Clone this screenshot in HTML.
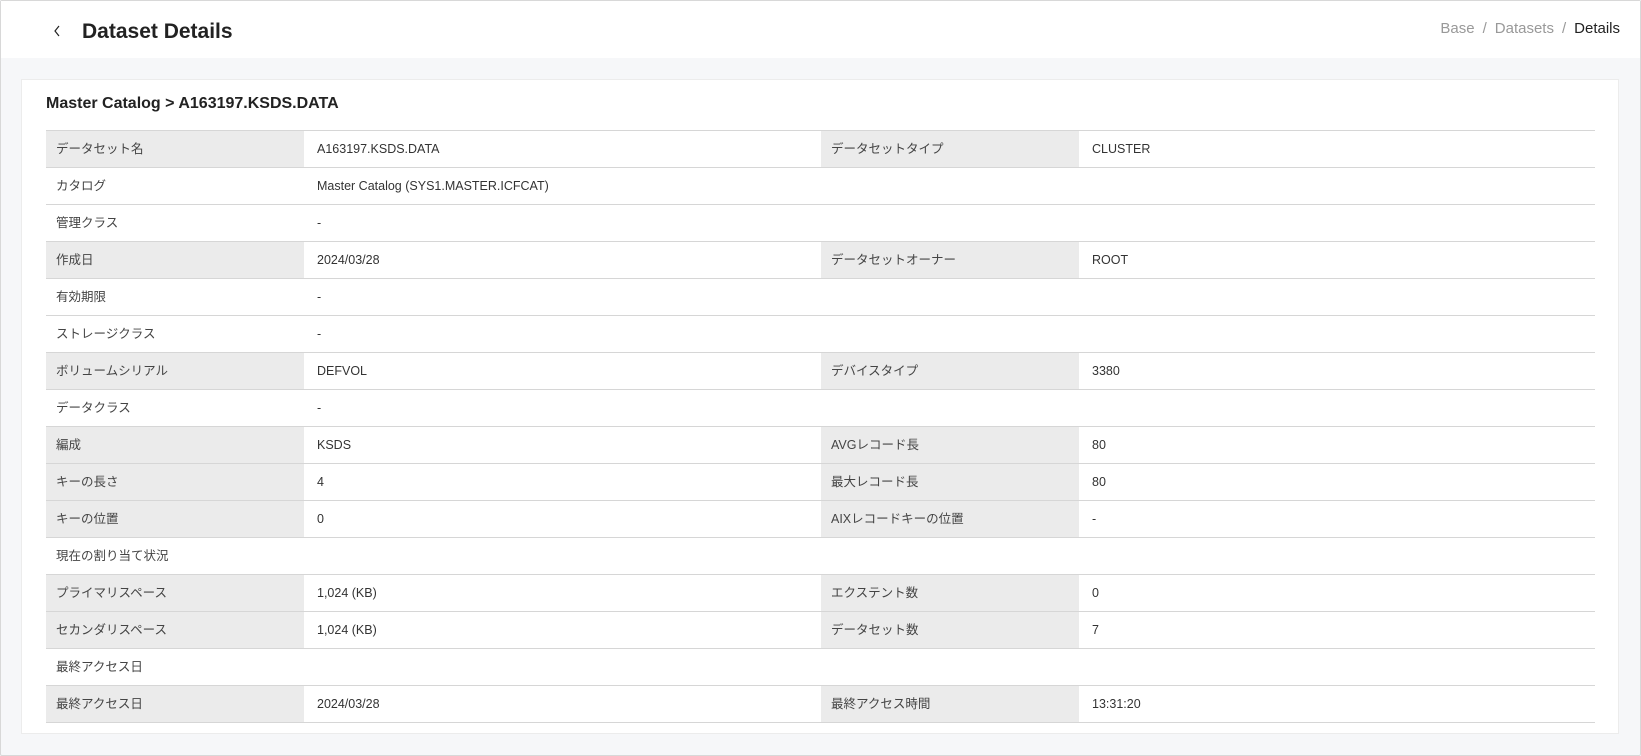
<!DOCTYPE html>
<html><head><meta charset="utf-8"><style>
*{margin:0;padding:0;box-sizing:border-box}
body{width:1641px;height:756px;background:#f6f7f9;font-family:"Liberation Sans","Noto Sans CJK JP",sans-serif;color:#333;position:relative;overflow:hidden}
.frame{position:absolute;left:0;top:0;width:1641px;height:756px;border:1px solid #d8d8d8;border-radius:2px}
.hdr{position:absolute;left:1px;top:1px;width:1639px;height:57px;background:#fff}
.back{position:absolute;left:50px;top:23px}
.title{position:absolute;left:82px;top:19px;font-size:21px;line-height:26px;font-weight:bold;color:#222}
.bc{position:absolute;right:21px;top:19px;font-size:15px;line-height:20px;color:#999}
.bc b{color:#222;font-weight:normal}
.bc span{margin:0 8px}
.card{position:absolute;left:21px;top:79px;width:1598px;height:655px;background:#fff;border:1px solid #ececec}
.sub{position:absolute;left:46px;top:94px;font-size:16px;line-height:20px;font-weight:bold;color:#222}
table{position:absolute;left:46px;top:130px;width:1549px;border-collapse:collapse;font-size:12.5px}
td{height:37px;line-height:16px;vertical-align:middle;border-top:1px solid #d6d6d6;border-bottom:1px solid #d6d6d6;padding:0 0 0 10px;color:#444}
td.v{padding-left:13px;color:#333}
td.g{background:#ebebeb}
col.a{width:258px}col.b{width:517px}col.c{width:258px}
</style></head><body>
<div class="frame"></div>
<div class="hdr"></div>
<svg class="back" width="14" height="16" viewBox="0 0 14 16"><path d="M9 3L5 8L9 13" fill="none" stroke="#222" stroke-width="1.2"/></svg>
<div class="title">Dataset Details</div>
<div class="bc">Base<span>/</span>Datasets<span>/</span><b>Details</b></div>
<div class="card"></div>
<div class="sub">Master Catalog &gt; A163197.KSDS.DATA</div>
<table><colgroup><col class="a"><col class="b"><col class="c"><col></colgroup>
<tr><td class="g">データセット名</td><td class="v">A163197.KSDS.DATA</td><td class="g">データセットタイプ</td><td class="v">CLUSTER</td></tr>
<tr><td>カタログ</td><td class="v" colspan="3">Master Catalog (SYS1.MASTER.ICFCAT)</td></tr>
<tr><td>管理クラス</td><td class="v" colspan="3">-</td></tr>
<tr><td class="g">作成日</td><td class="v">2024/03/28</td><td class="g">データセットオーナー</td><td class="v">ROOT</td></tr>
<tr><td>有効期限</td><td class="v" colspan="3">-</td></tr>
<tr><td>ストレージクラス</td><td class="v" colspan="3">-</td></tr>
<tr><td class="g">ボリュームシリアル</td><td class="v">DEFVOL</td><td class="g">デバイスタイプ</td><td class="v">3380</td></tr>
<tr><td>データクラス</td><td class="v" colspan="3">-</td></tr>
<tr><td class="g">編成</td><td class="v">KSDS</td><td class="g">AVGレコード長</td><td class="v">80</td></tr>
<tr><td class="g">キーの長さ</td><td class="v">4</td><td class="g">最大レコード長</td><td class="v">80</td></tr>
<tr><td class="g">キーの位置</td><td class="v">0</td><td class="g">AIXレコードキーの位置</td><td class="v">-</td></tr>
<tr><td colspan="4">現在の割り当て状況</td></tr>
<tr><td class="g">プライマリスペース</td><td class="v">1,024 (KB)</td><td class="g">エクステント数</td><td class="v">0</td></tr>
<tr><td class="g">セカンダリスペース</td><td class="v">1,024 (KB)</td><td class="g">データセット数</td><td class="v">7</td></tr>
<tr><td colspan="4">最終アクセス日</td></tr>
<tr><td class="g">最終アクセス日</td><td class="v">2024/03/28</td><td class="g">最終アクセス時間</td><td class="v">13:31:20</td></tr>
</table>
</body></html>
